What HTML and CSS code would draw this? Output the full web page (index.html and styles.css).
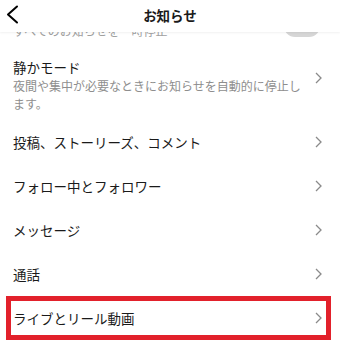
FILE: index.html
```html
<!DOCTYPE html>
<html lang="ja">
<head>
    <meta charset="UTF-8">
    <meta name="viewport" content="width=device-width, initial-scale=1.0">
    <title>お知らせ</title>
    <link rel="stylesheet" href="styles.css">
</head>
<body>
    <div class="topbar">
        <svg class="back" width="24" height="32" viewBox="0 0 24 32">
            <polyline points="17,6.5 8,14.5 17,22.5" fill="none" stroke="#000" stroke-width="2" stroke-linecap="round" stroke-linejoin="round"/>
        </svg>
        <div class="topbar-title">お知らせ</div>
    </div>

    <div class="cut-row">
        <span class="cut-text">すべてのお知らせを一時停止</span>
        <span class="toggle"></span>
    </div>

    <div class="row quiet">
        <div class="row-text">
            <div class="row-title">静かモード</div>
            <div class="row-sub">夜間や集中が必要なときにお知らせを自動的に停止します。</div>
        </div>
        <svg class="chev" width="7" height="12" viewBox="0 0 7 12"><polyline points="1,1 6,6 1,11" fill="none" stroke="#8a8a8a" stroke-width="1.3"/></svg>
    </div>

    <div class="row">
        <div class="row-title">投稿、ストーリーズ、コメント</div>
        <svg class="chev" width="7" height="12" viewBox="0 0 7 12"><polyline points="1,1 6,6 1,11" fill="none" stroke="#8a8a8a" stroke-width="1.3"/></svg>
    </div>
    <div class="row">
        <div class="row-title">フォロー中とフォロワー</div>
        <svg class="chev" width="7" height="12" viewBox="0 0 7 12"><polyline points="1,1 6,6 1,11" fill="none" stroke="#8a8a8a" stroke-width="1.3"/></svg>
    </div>
    <div class="row">
        <div class="row-title">メッセージ</div>
        <svg class="chev" width="7" height="12" viewBox="0 0 7 12"><polyline points="1,1 6,6 1,11" fill="none" stroke="#8a8a8a" stroke-width="1.3"/></svg>
    </div>
    <div class="row">
        <div class="row-title">通話</div>
        <svg class="chev" width="7" height="12" viewBox="0 0 7 12"><polyline points="1,1 6,6 1,11" fill="none" stroke="#8a8a8a" stroke-width="1.3"/></svg>
    </div>
    <div class="row marked">
        <div class="row-title">ライブとリール動画</div>
        <svg class="chev" width="7" height="12" viewBox="0 0 7 12"><polyline points="1,1 6,6 1,11" fill="none" stroke="#8a8a8a" stroke-width="1.3"/></svg>
    </div>
</body>
</html>
```

FILE: styles.css
```css
body {
    margin: 0;
    width: 340px;
    background: #fff;
    color: #1a1a1a;
    font-family: "Noto Sans CJK JP", "Noto Sans", sans-serif;
    overflow: hidden;
}

.topbar {
    position: relative;
    z-index: 1;
    height: 32px;
    display: flex;
    align-items: center;
    justify-content: center;
    background: #fff;
    box-shadow: 0 1px 2px rgba(0, 0, 0, 0.06);
}

.back {
    position: absolute;
    left: 0;
    top: 0;
}

.topbar-title {
    font-size: 13.5px;
    font-weight: bold;
    margin-top: -3px;
}

.cut-row {
    height: 6px;
    overflow: hidden;
    display: flex;
    align-items: flex-end;
    justify-content: space-between;
    padding: 0 20px 0 13px;
}

.cut-text {
    font-size: 12px;
    line-height: 12px;
    margin-bottom: 1px;
    color: #a0a0a0;
    white-space: nowrap;
}

.toggle {
    width: 36px;
    height: 22px;
    margin-bottom: 1px;
    border-radius: 11px;
    background: #d6d6d6;
    flex-shrink: 0;
}

.row {
    height: 44px;
    display: flex;
    align-items: center;
    justify-content: space-between;
    padding: 0 18px 0 13px;
    box-sizing: border-box;
}

.row-title {
    font-size: 13.5px;
    line-height: 19px;
}

.quiet {
    height: 82px;
    align-items: flex-start;
    padding-top: 20px;
    gap: 12px;
}

.quiet .row-text {
    flex: 1;
}

.quiet .chev {
    margin-top: 14px;
}

.row-sub {
    font-size: 12px;
    line-height: 18px;
    color: #8e8e8e;
}

.chev {
    flex-shrink: 0;
}

.marked {
    position: relative;
}

.marked::after {
    content: "";
    position: absolute;
    left: 6px;
    right: 9px;
    top: 0;
    bottom: 0;
    border: 5px solid #e2212b;
}
```
